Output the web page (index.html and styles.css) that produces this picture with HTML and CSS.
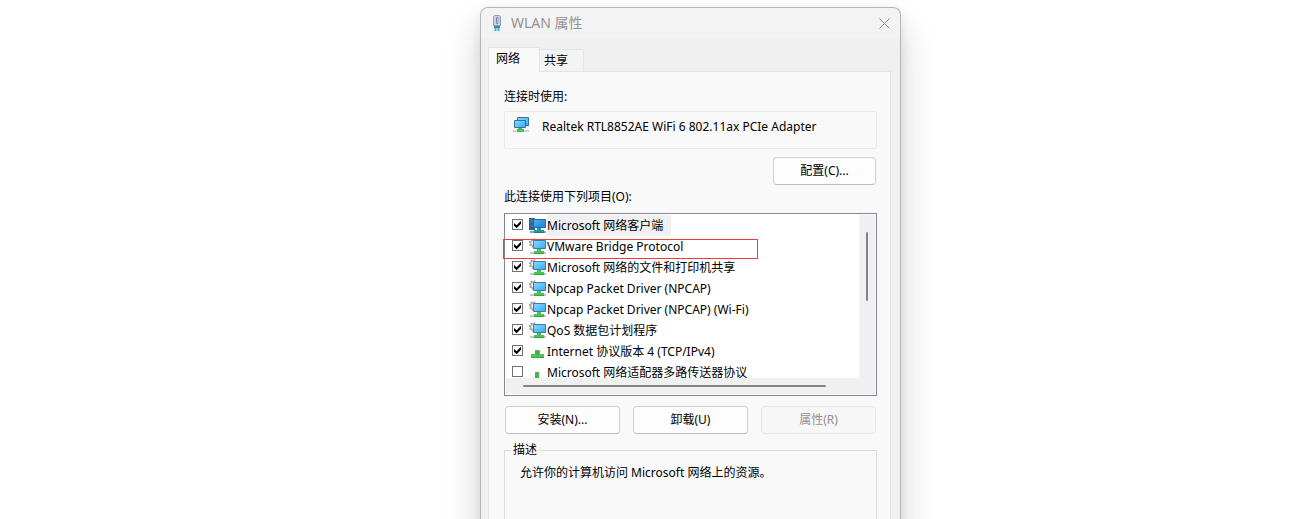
FILE: index.html
```html
<!DOCTYPE html>
<html lang="zh-CN">
<head>
<meta charset="utf-8">
<title>WLAN 属性</title>
<link rel="stylesheet" href="styles.css">
</head>
<body>
<svg class="defs" aria-hidden="true">
  <defs>
    <linearGradient id="screen" x1="0" y1="0" x2="1" y2="1">
      <stop offset="0" stop-color="#8ad8ff"/>
      <stop offset="1" stop-color="#35adf5"/>
    </linearGradient>
    <linearGradient id="screen-dark" x1="0" y1="0" x2="1" y2="1">
      <stop offset="0" stop-color="#4bb2f4"/>
      <stop offset="1" stop-color="#1686dd"/>
    </linearGradient>
    <symbol id="client" viewBox="0 0 17 17">
      <path d="M0 1h6v12H0z" fill="#2b658f"/>
      <path d="M1 3h3M1 5h3M1 9h3" stroke="#4a86b0"/>
      <path d="M4.500 2.500h12v8h-12z" fill="url(#screen-dark)" stroke="#236a9e"/>
      <path d="M8 11h4v2h3v3H5v-3h3z" fill="#2b969c"/>
      <path d="M5 15h10v1H5z" fill="#207b88"/>
      <path d="M1 14h4v2H1zM15 14h2v2h-2z" fill="#7fa9b8"/>
    </symbol>
    <symbol id="service" viewBox="0 0 17 17">
      <circle cx="4.500" cy="5" r="3" fill="#f2f2f2" stroke="#b0b0b0" stroke-width="1.500"/>
      <circle cx="4.500" cy="5" r="4" fill="none" stroke="#9a9a9a" stroke-width="1.500" stroke-dasharray="1.500 1.600"/>
      <path d="M4.500 2.500h12v8h-12z" fill="url(#screen)" stroke="#3f7ba5"/>
      <path d="M8 11h4v2h3v3H5v-3h3z" fill="#4cc455"/>
      <path d="M5 15h10v1H5z" fill="#2fa53d"/>
      <path d="M1 14h4v2H1zM15 14h2v2h-2z" fill="#c6c6c6"/>
    </symbol>
    <symbol id="protocol" viewBox="0 0 17 17">
      <path d="M6 7h5v4h4v4H2v-4h4z" fill="#52c45b"/>
      <path d="M6 8h4v4H6z" fill="#3eb249"/>
      <path d="M2 14h13v1H2z" fill="#35a542"/>
    </symbol>
    <symbol id="multiplexor" viewBox="0 0 17 17">
      <path d="M6 8h4v8H6z" fill="#42b84c"/>
    </symbol>
  </defs>
</svg>
<main class="desktop">
  <section class="dialog" aria-labelledby="title">
    <header class="titlebar">
      <svg class="plug" viewBox="0 0 10 17" aria-hidden="true">
        <path d="M2.500 .5h5l1 1v9h-7v-9z" fill="#c9d3e4" stroke="#8d9ab3"/>
        <path d="M4.500 2.500h1.500v6H4.500z" fill="#fff" stroke="#7b88a2"/>
        <path d="M2 11h6v2H2z" fill="#3f87a8"/>
        <path d="M3.500 13v3M6.500 13v3" stroke="#35b6da" stroke-width="2"/>
      </svg>
      <h1 class="title" id="title">WLAN 属性</h1>
      <button class="close" type="button" aria-label="关闭">
        <svg viewBox="0 0 11 11" aria-hidden="true"><path d="M.5.5l10 10M10.500.5l-10 10" fill="none" stroke="#8c8c8c"/></svg>
      </button>
    </header>
    <div class="body">
      <div class="tabs" role="tablist">
        <button class="tab tab-active" type="button" role="tab" aria-selected="true">网络</button>
        <button class="tab" type="button" role="tab" aria-selected="false">共享</button>
      </div>
      <div class="panel" role="tabpanel">
        <p class="label">连接时使用:</p>
        <div class="adapter">
          <svg class="adapter-icon" viewBox="0 0 16 16" aria-hidden="true">
            <path d="M4.500.5h11v8h-11z" fill="url(#screen)" stroke="#32749f"/>
            <path d="M1.500 3.500h11v7h-11z" fill="url(#screen)" stroke="#32749f"/>
            <path d="M0 13h16v2H0z" fill="#cfd2d4"/>
            <path d="M5 11h4v1h2v3H4v-3h1z" fill="#4bbf55"/>
          </svg>
          <span>Realtek RTL8852AE WiFi 6 802.11ax PCIe Adapter</span>
        </div>
        <button class="btn configure" type="button">配置(C)...</button>
        <p class="label items-label" id="items">此连接使用下列项目(O):</p>
        <div class="listbox">
          <div class="annotation"></div>
          <ul class="list" aria-labelledby="items">
            <li><label class="row"><input class="check" type="checkbox" checked><svg class="icon" aria-hidden="true"><use href="#client"/></svg><span class="name name-selected">Microsoft 网络客户端</span></label></li>
            <li><label class="row"><input class="check" type="checkbox" checked><svg class="icon" aria-hidden="true"><use href="#service"/></svg><span class="name">VMware Bridge Protocol</span></label></li>
            <li><label class="row"><input class="check" type="checkbox" checked><svg class="icon" aria-hidden="true"><use href="#service"/></svg><span class="name">Microsoft 网络的文件和打印机共享</span></label></li>
            <li><label class="row"><input class="check" type="checkbox" checked><svg class="icon" aria-hidden="true"><use href="#service"/></svg><span class="name">Npcap Packet Driver (NPCAP)</span></label></li>
            <li><label class="row"><input class="check" type="checkbox" checked><svg class="icon" aria-hidden="true"><use href="#service"/></svg><span class="name">Npcap Packet Driver (NPCAP) (Wi-Fi)</span></label></li>
            <li><label class="row"><input class="check" type="checkbox" checked><svg class="icon" aria-hidden="true"><use href="#service"/></svg><span class="name">QoS 数据包计划程序</span></label></li>
            <li><label class="row"><input class="check" type="checkbox" checked><svg class="icon" aria-hidden="true"><use href="#protocol"/></svg><span class="name">Internet 协议版本 4 (TCP/IPv4)</span></label></li>
            <li><label class="row"><input class="check" type="checkbox"><svg class="icon" aria-hidden="true"><use href="#multiplexor"/></svg><span class="name">Microsoft 网络适配器多路传送器协议</span></label></li>
          </ul>
          <div class="track-v"><div class="thumb-v"></div></div>
          <div class="track-h"><div class="thumb-h"></div></div>
        </div>
        <div class="actions">
          <button class="btn" type="button">安装(N)...</button>
          <button class="btn" type="button">卸载(U)</button>
          <button class="btn" type="button" disabled>属性(R)</button>
        </div>
        <fieldset class="group">
          <legend class="legend">描述</legend>
          <p class="label">允许你的计算机访问 Microsoft 网络上的资源。</p>
        </fieldset>
      </div>
    </div>
  </section>
</main>
</body>
</html>
```
FILE: styles.css
```css
* {
  box-sizing: border-box;
}

body {
  margin: 0;
  background: #fff;
  color: #000;
  font: 12px/16px "Noto Sans", "Noto Sans CJK SC", sans-serif;
}

button {
  margin: 0;
  padding: 0;
  color: inherit;
  font: inherit;
}

svg {
  display: block;
}

.defs {
  position: absolute;
  width: 0;
  height: 0;
}

.desktop {
  display: grid;
  grid-template-columns: 480fr minmax(421px, 421fr) 408fr;
  height: 100vh;
  padding-top: 7px;
  overflow: hidden;
}

.dialog {
  grid-column: 2;
  display: flex;
  flex-direction: column;
  border: 1px solid #b5b5b5;
  border-bottom: 0;
  border-radius: 8px 8px 0 0;
  background: #f0f0f0;
  box-shadow: 0 20px 36px rgba(0, 0, 0, .18), 0 4px 12px rgba(0, 0, 0, .08);
}

.titlebar {
  display: flex;
  align-items: center;
  height: 30px;
  padding: 0 10px 0 11px;
  border-radius: 8px 8px 0 0;
  background: #f3f3f3;
}

.plug {
  width: 10px;
  height: 17px;
}

.title {
  flex: 1;
  margin: 0 0 0 9px;
  color: #929292;
  font-size: 14px;
  font-weight: 400;
  line-height: 20px;
}

.close {
  border: 0;
  background: none;
}

.close svg {
  width: 11px;
  height: 11px;
}

.body {
  flex: 1;
  display: flex;
  flex-direction: column;
  padding: 9px 9px 0 7px;
}

.tabs {
  display: flex;
  align-items: flex-end;
}

.tab {
  height: 22px;
  padding: 0 15px 0 4px;
  border: 1px solid #e5e5e5;
  border-width: 1px 1px 0 0;
  background: #f3f3f3;
}

.tab-active {
  z-index: 1;
  height: 25px;
  margin-bottom: -1px;
  padding: 0 19px 3px 7px;
  border-left-width: 1px;
  background: #f9f9f9;
}

.panel {
  flex: 1;
  padding: 17px 13px 0 15px;
  border: 1px solid #e5e5e5;
  border-bottom: 0;
  background: #f9f9f9;
}

.label {
  margin: 0;
}

.adapter {
  display: flex;
  gap: 13px;
  height: 38px;
  margin-top: 6px;
  padding: 5px 8px;
  border: 1px solid #ebebeb;
  border-radius: 2px;
  line-height: 20px;
}

.adapter-icon {
  width: 16px;
  height: 16px;
}

.btn {
  height: 28px;
  border: 1px solid #d0d0d0;
  border-bottom-color: #bcbcbc;
  border-radius: 4px;
  background: #fdfdfd;
}

.btn:disabled {
  border-color: #e5e5e5;
  background: #f7f7f7;
  color: #929292;
}

.configure {
  display: block;
  width: 103px;
  margin: 8px 1px 0 auto;
}

.items-label {
  margin-top: 4px;
}

.listbox {
  position: relative;
  display: grid;
  grid-template: 163px 16px / 1fr 16px;
  margin-top: 8px;
  padding: 1px;
  border: 1px solid #828790;
  background: #fff;
}

.list {
  margin: 0;
  padding: 0;
  overflow: hidden;
  list-style: none;
}

.row {
  display: flex;
  align-items: center;
  height: 21px;
  padding-left: 6px;
  white-space: nowrap;
}

.check {
  width: 11px;
  height: 11px;
  margin: 0 6px 2px 0;
  appearance: none;
  border: 1px solid #707070;
  background: #fff;
}

.check:checked::before {
  content: "";
  display: block;
  width: 9px;
  height: 9px;
  background: #000;
  clip-path: polygon(11% 33%, 40% 58%, 89% 8%, 89% 42%, 40% 91%, 11% 65%);
}

.icon {
  width: 17px;
  height: 17px;
  margin-right: 1px;
}

.name {
  line-height: 21px;
}

.name-selected {
  padding-right: 8px;
  background: #f0f0f0;
}

.track-v {
  padding: 17px 7px 0;
  background: #f0f0f0;
}

.thumb-v {
  height: 69px;
  border-radius: 1px;
  background: #858585;
}

.track-h {
  grid-column: 1 / -1;
  padding: 7px 49px 7px 17px;
  background: #f0f0f0;
}

.thumb-h {
  height: 2px;
  border-radius: 1px;
  background: #858585;
}

.annotation {
  position: absolute;
  top: 25px;
  left: -2px;
  width: 255px;
  height: 20px;
  border: 1px solid #f23c3c;
  pointer-events: none;
}

.actions {
  display: grid;
  grid-template-columns: repeat(3, 1fr);
  gap: 13px;
  margin: 10px 1px 8px;
}

.group {
  height: 160px;
  margin: 0;
  padding: 7px 15px;
  border: 1px solid #dcdcdc;
}

.legend {
  margin-left: -9px;
  padding: 0 2px;
}
```
